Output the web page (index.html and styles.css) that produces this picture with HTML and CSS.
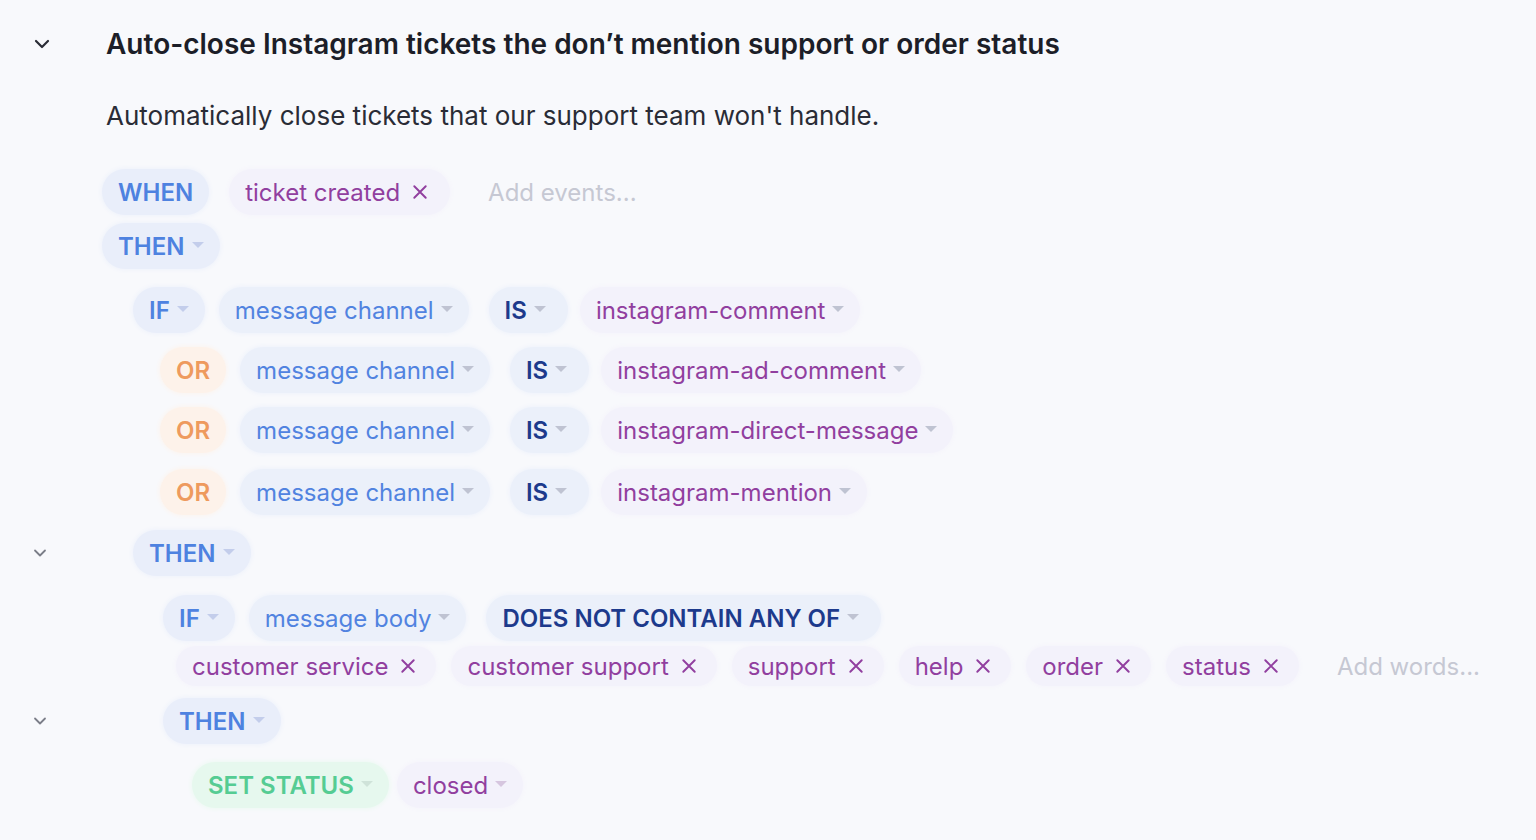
FILE: index.html
```html
<!DOCTYPE html>
<html>
<head>
<meta charset="utf-8">
<link rel="stylesheet" href="styles.css">
</head>
<body>
<div class="rule">
  <div class="row head">
    <div class="gutter"><svg class="chev big" viewBox="0 0 16 10"><path d="M2 2 L8 8 L14 2"/></svg></div>
    <h1 class="title">Auto-close Instagram tickets the don’t mention support or order status</h1>
  </div>
  <div class="row desc-row">
    <div class="gutter"></div>
    <p class="desc">Automatically close tickets that our support team won't handle.</p>
  </div>

  <div class="row line">
    <div class="gutter"></div>
    <div class="pills">
      <span class="pill kw">WHEN</span>
      <span class="pill val rm">ticket created <svg class="x" viewBox="0 0 14 14"><path d="M2 2 L12 12 M12 2 L2 12"/></svg></span>
      <span class="ph">Add events...</span>
    </div>
  </div>
  <div class="row line g8">
    <div class="gutter"></div>
    <div class="pills">
      <span class="pill kw">THEN<i class="caret"></i></span>
    </div>
  </div>

  <div class="row line g18">
    <div class="gutter"></div>
    <div class="pills ind1">
      <span class="pill kw">IF<i class="caret"></i></span>
      <span class="pill field">message channel<i class="caret c2"></i></span>
      <span class="pill op">IS<i class="caret c2"></i></span>
      <span class="pill val">instagram-comment<i class="caret c2"></i></span>
    </div>
  </div>
  <div class="row line">
    <div class="gutter"></div>
    <div class="pills ind-or">
      <span class="pill or">OR</span>
      <span class="pill field">message channel<i class="caret c2"></i></span>
      <span class="pill op">IS<i class="caret c2"></i></span>
      <span class="pill val">instagram-ad-comment<i class="caret c2"></i></span>
    </div>
  </div>
  <div class="row line">
    <div class="gutter"></div>
    <div class="pills ind-or">
      <span class="pill or">OR</span>
      <span class="pill field">message channel<i class="caret c2"></i></span>
      <span class="pill op">IS<i class="caret c2"></i></span>
      <span class="pill val">instagram-direct-message<i class="caret c2"></i></span>
    </div>
  </div>
  <div class="row line g16">
    <div class="gutter"></div>
    <div class="pills ind-or">
      <span class="pill or">OR</span>
      <span class="pill field">message channel<i class="caret c2"></i></span>
      <span class="pill op">IS<i class="caret c2"></i></span>
      <span class="pill val">instagram-mention<i class="caret c2"></i></span>
    </div>
  </div>

  <div class="row line g15">
    <div class="gutter"><svg class="chev small" viewBox="0 0 16 10"><path d="M3 2.5 L8 7.5 L13 2.5"/></svg></div>
    <div class="pills ind1">
      <span class="pill kw">THEN<i class="caret"></i></span>
    </div>
  </div>
  <div class="row line g19">
    <div class="gutter"></div>
    <div class="pills ind2">
      <span class="pill kw">IF<i class="caret"></i></span>
      <span class="pill field">message body<i class="caret c2"></i></span>
      <span class="pill op">DOES NOT CONTAIN ANY OF<i class="caret c2"></i></span>
    </div>
  </div>
  <div class="row words">
    <div class="gutter"></div>
    <div class="pills ind-w">
      <span class="pill val sm">customer service <svg class="x" viewBox="0 0 14 14"><path d="M2 2 L12 12 M12 2 L2 12"/></svg></span>
      <span class="pill val sm">customer support <svg class="x" viewBox="0 0 14 14"><path d="M2 2 L12 12 M12 2 L2 12"/></svg></span>
      <span class="pill val sm">support <svg class="x" viewBox="0 0 14 14"><path d="M2 2 L12 12 M12 2 L2 12"/></svg></span>
      <span class="pill val sm">help <svg class="x" viewBox="0 0 14 14"><path d="M2 2 L12 12 M12 2 L2 12"/></svg></span>
      <span class="pill val sm">order <svg class="x" viewBox="0 0 14 14"><path d="M2 2 L12 12 M12 2 L2 12"/></svg></span>
      <span class="pill val sm">status <svg class="x" viewBox="0 0 14 14"><path d="M2 2 L12 12 M12 2 L2 12"/></svg></span>
      <span class="ph words-ph">Add words...</span>
    </div>
  </div>
  <div class="row line g12">
    <div class="gutter"><svg class="chev small" viewBox="0 0 16 10"><path d="M3 2.5 L8 7.5 L13 2.5"/></svg></div>
    <div class="pills ind2">
      <span class="pill kw">THEN<i class="caret"></i></span>
    </div>
  </div>
  <div class="row line g18">
    <div class="gutter"></div>
    <div class="pills ind3">
      <span class="pill act">SET STATUS<i class="caret c3"></i></span>
      <span class="pill val">closed<i class="caret c4"></i></span>
    </div>
  </div>
</div>
</body>
</html>
```

FILE: styles.css
```css
* { box-sizing: border-box; }
html, body {
  margin: 0;
  padding: 0;
  background: #f8f9fc;
  font-family: Inter, "Noto Sans", sans-serif;
  color: #1f2230;
}
body { width: 1536px; height: 840px; overflow: hidden; }

.rule { padding-top: 25px; }

.row { display: flex; align-items: center; }
.gutter {
  width: 102px;
  flex: none;
  display: flex;
  justify-content: center;
  padding-right: 20px;
}
.head { height: 40px; margin-top: -1px; }
.head .gutter { padding-right: 18px; }

.chev { fill: none; stroke-linecap: round; stroke-linejoin: round; }
.chev.big { width: 16px; height: 10px; stroke: #2a2c36; stroke-width: 2.2; }
.chev.small { width: 16px; height: 10px; stroke: #7b7e88; stroke-width: 1.8; margin-right: 2px; }

.title {
  margin: 0;
  font-size: 28px;
  font-weight: 600;
  color: #1c1e28;
  padding-left: 4px;
}
.desc-row { margin-top: 31px; height: 40px; }
.desc {
  margin: 0;
  padding-left: 4px;
  font-size: 26px;
  font-weight: 400;
  color: #2a2c36;
}

.line { height: 46px; margin-top: 14px; }
.desc-row + .line { margin-top: 34px; }
.line.g8 { margin-top: 8px; }
.line.g18 { margin-top: 18px; }
.line.g19 { margin-top: 19px; }
.line.g16 { margin-top: 16px; }
.line.g15 { margin-top: 15px; }
.line.g12 { margin-top: 12px; }
.words { height: 40px; margin-top: 5px; }

.pills { display: flex; align-items: center; gap: 20px; }
.ind1 { margin-left: 31px; gap: 14px; }
.ind-or { margin-left: 58px; gap: 14px; }
.ind2 { margin-left: 61px; gap: 14px; }
.ind-w { margin-left: 74px; gap: 15px; }
.ind3 { margin-left: 90px; gap: 8px; }

.pill {
  display: inline-flex;
  align-items: center;
  height: 46px;
  padding: 0 16px 0 16px;
  border-radius: 23px;
  font-size: 24px;
  white-space: nowrap;
}
.pill.sm { height: 40px; border-radius: 20px; padding: 0 20px 0 16px; }
.pill.rm { padding-right: 22px; }

.kw {
  background: #e9eefa;
  box-shadow: 0 0 4px 1px #eef2fb;
  color: #4e82e0;
  font-weight: 600;
}
.field {
  background: #ebf0fa;
  box-shadow: 0 0 4px 1px #eef2fb;
  color: #5183e0;
  font-weight: 400;
}
.op {
  background: #ebf0fa;
  box-shadow: 0 0 4px 1px #eef2fb;
  color: #1d3a8c;
  font-weight: 600;
  padding-right: 22px;
  margin-left: 6px;
}
.val {
  background: #f3f2fb;
  box-shadow: 0 0 4px 1px #f5f4fb;
  color: #913f9f;
  font-weight: 400;
}
.op + .val { margin-left: -2px; }
.or {
  background: #fdf2ea;
  box-shadow: 0 0 4px 1px #fcf4ee;
  color: #ee9a5e;
  font-weight: 600;
}
.act {
  background: #e6f8ee;
  box-shadow: 0 0 4px 1px #ecf9f2;
  color: #55cc93;
  font-weight: 600;
}

.caret {
  display: inline-block;
  width: 0;
  height: 0;
  border-left: 6px solid transparent;
  border-right: 6px solid transparent;
  border-top: 6px solid #c3cdeb;
  margin-left: 7px;
  margin-top: -2px;
}
.caret.c2 { border-top-color: #bfc3d2; }
.caret.c3 { border-top-color: #cfe3d9; }
.caret.c4 { border-top-color: #d6c6df; }

.x {
  width: 16px;
  height: 16px;
  margin-left: 12px;
  fill: none;
  stroke: #913f9f;
  stroke-width: 1.7;
  stroke-linecap: round;
}

.ph {
  font-size: 24px;
  color: #c6c8d3;
  margin-left: 18px;
}
.words-ph { margin-left: 23px; }
```
